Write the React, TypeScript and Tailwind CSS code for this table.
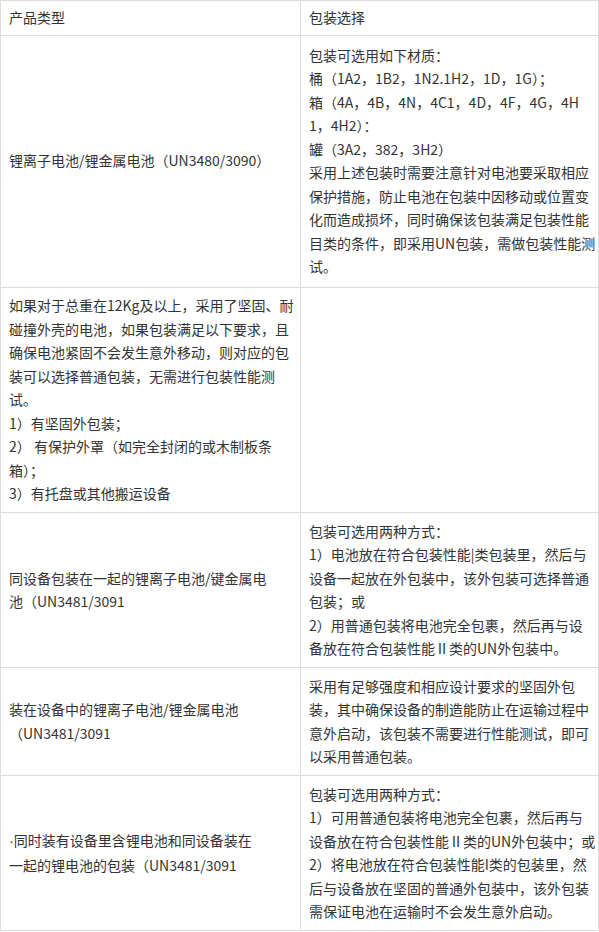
import React from "react";

// each cell is written as its visible lines, so wrapping matches the source
type Row = { left: string[]; right: string[]; tall?: boolean };

const ROWS: Row[] = [
  {
    tall: true,
    left: ["锂离子电池/锂金属电池（UN3480/3090）"],
    right: [
      "包装可选用如下材质：",
      "桶（1A2，1B2，1N2.1H2，1D，1G）；",
      "箱（4A，4B，4N，4C1，4D，4F，4G，4H",
      "1，4H2）：",
      "罐（3A2，382，3H2）",
      "采用上述包装时需要注意针对电池要采取相应",
      "保护措施，防止电池在包装中因移动或位置变",
      "化而造成损坏，同时确保该包装满足包装性能",
      "目类的条件，即采用UN包装，需做包装性能测",
      "试。",
    ],
  },
  {
    left: [
      "如果对于总重在12Kg及以上，采用了坚固、耐",
      "碰撞外壳的电池，如果包装满足以下要求，且",
      "确保电池紧固不会发生意外移动，则对应的包",
      "装可以选择普通包装，无需进行包装性能测",
      "试。",
      "1）有坚固外包装；",
      "2） 有保护外罩（如完全封闭的或木制板条",
      "箱）；",
      "3）有托盘或其他搬运设备",
    ],
    right: [],
  },
  {
    left: ["同设备包装在一起的锂离子电池/键金属电", "池（UN3481/3091"],
    right: [
      "包装可选用两种方式：",
      "1）电池放在符合包装性能|类包装里，然后与",
      "设备一起放在外包装中，该外包装可选择普通",
      "包装；或",
      "2）用普通包装将电池完全包裹，然后再与设",
      "备放在符合包装性能Ⅱ类的UN外包装中。",
    ],
  },
  {
    left: ["装在设备中的锂离子电池/锂金属电池", "（UN3481/3091"],
    right: [
      "采用有足够强度和相应设计要求的坚固外包",
      "装，其中确保设备的制造能防止在运输过程中",
      "意外启动，该包装不需要进行性能测试，即可",
      "以采用普通包装。",
    ],
  },
  {
    left: ["·同时装有设备里含锂电池和同设备装在", "一起的锂电池的包装（UN3481/3091"],
    right: [
      "包装可选用两种方式：",
      "1）可用普通包装将电池完全包裹，然后再与",
      "设备放在符合包装性能Ⅱ类的UN外包装中；或",
      "2）将电池放在符合包装性能I类的包装里，然",
      "后与设备放在坚固的普通外包装中，该外包装",
      "需保证电池在运输时不会发生意外启动。",
    ],
  },
];

function Lines({ lines }: { lines: string[] }) {
  return (
    <>
      {lines.map((line, i) =>
        line.startsWith("·") ? (
          <div key={i} className="whitespace-nowrap">
            <span className="font-['Liberation_Sans',sans-serif]">·</span>
            {line.slice(1)}
          </div>
        ) : (
          <div key={i} className="whitespace-nowrap">
            {line}
          </div>
        )
      )}
    </>
  );
}

export default function App() {
  return (
    <div className="w-[599px] bg-white font-['Noto_Sans_CJK_SC',sans-serif] text-[14px] leading-[23.5px] text-[#333]">
      <table className="w-full table-fixed border-collapse border border-[#dcdcdc]">
        <colgroup>
          <col className="w-[300px]" />
          <col />
        </colgroup>
        <thead>
          <tr>
            <th className="border border-[#dcdcdc] px-2 py-[5px] text-left font-normal">产品类型</th>
            <th className="border border-[#dcdcdc] px-2 py-[5px] text-left font-normal">包装选择</th>
          </tr>
        </thead>
        <tbody>
          {ROWS.map((row, i) => {
            const pad = row.tall ? "py-[8px]" : "py-[6.5px]";
            return (
              <tr key={i}>
                <td className={`border border-[#dcdcdc] px-2 ${pad} align-middle`}>
                  <Lines lines={row.left} />
                </td>
                <td className={`border border-[#dcdcdc] px-2 ${pad} align-middle`}>
                  <Lines lines={row.right} />
                </td>
              </tr>
            );
          })}
        </tbody>
      </table>
    </div>
  );
}
